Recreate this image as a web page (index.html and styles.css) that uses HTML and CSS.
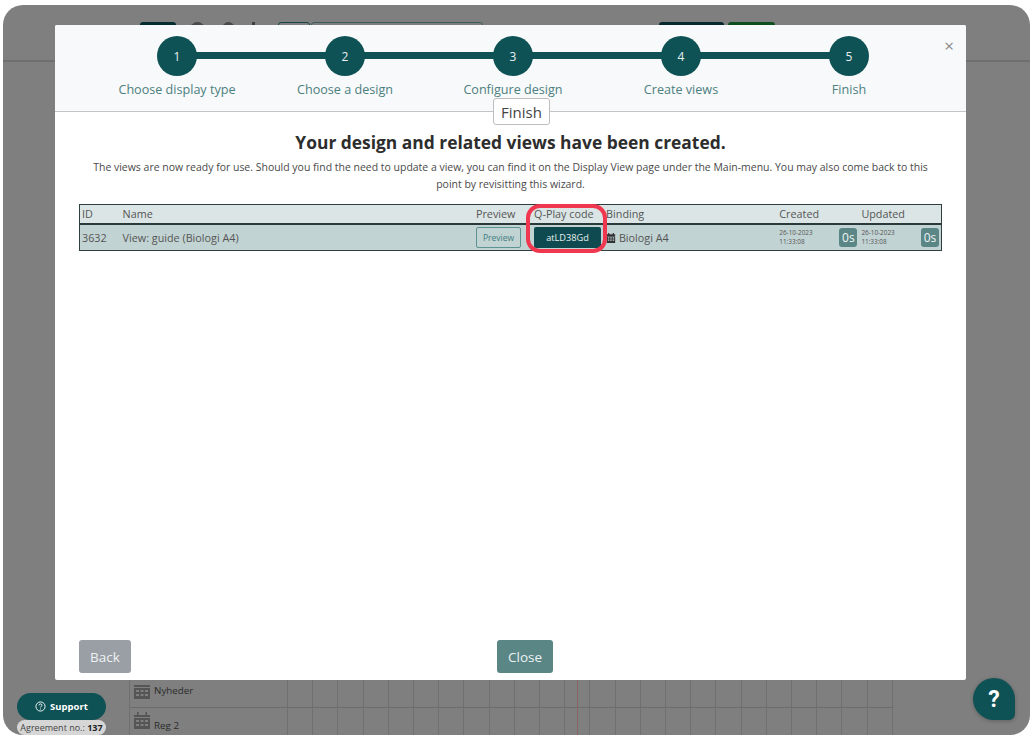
FILE: index.html
```html
<!DOCTYPE html>
<html lang="en">
<head>
<meta charset="utf-8">
<title>Design wizard</title>
<link rel="stylesheet" href="styles.css">
</head>
<body>
<div class="frame">
  <div class="app">
    <header class="topbar">
      <span class="tb-dark"></span>
      <span class="tb-dot"></span>
      <span class="tb-dot tb-dot2"></span>
      <span class="tb-tick"></span>
      <span class="tb-box tb-box1"></span>
      <span class="tb-box tb-box2"></span>
      <span class="tb-btn1"></span>
      <span class="tb-btn2"></span>
    </header>
    <div class="sheet">
      <div class="row row1">
        <div class="row-head">
          <svg class="cal" viewBox="0 0 16 17"><path d="M0 3h16v2H0z"/><path d="M0 6h16v11H0z"/><g class="cal-holes"><path d="M2 8h3v2H2zM6.500 8h3v2h-3zM11 8h3v2h-3zM2 12h3v2H2zM6.500 12h3v2h-3zM11 12h3v2h-3z"/></g></svg>
          <span class="row-name">Nyheder</span>
        </div>
        <div class="cells"></div>
      </div>
      <div class="row row2">
        <div class="row-head">
          <svg class="cal" viewBox="0 0 16 17"><path d="M3 0h1.500v3H3zM11.500 0H13v3h-1.500zM0 3h16v2H0z"/><path d="M0 6h16v11H0z"/><g class="cal-holes"><path d="M2 8h3v2H2zM6.500 8h3v2h-3zM11 8h3v2h-3zM2 12h3v2H2zM6.500 12h3v2h-3zM11 12h3v2h-3z"/></g></svg>
          <span class="row-name">Reg 2</span>
        </div>
        <div class="cells"></div>
      </div>
      <span class="now-line"></span>
    </div>
  </div>

  <div class="support">
    <button class="support-btn">
      <svg class="support-ico" viewBox="0 0 12 12"><circle cx="6" cy="6" r="5" /><path d="M4.400 4.700C4.400 3.700 5.100 3.200 6 3.200c.9 0 1.600.6 1.600 1.400 0 1.200-1.600 1.200-1.600 2.400"/><path d="M6 8.200v1"/></svg>
      Support
    </button>
    <div class="agreement">Agreement no.: <b>137</b></div>
  </div>
  <button class="help">?</button>

  <section class="modal">
    <button class="modal-x">×</button>
    <div class="modal-head">
      <ol class="steps">
        <li class="step"><span class="dot">1</span><span class="step-label">Choose display type</span></li>
        <li class="step"><span class="dot">2</span><span class="step-label">Choose a design</span></li>
        <li class="step"><span class="dot">3</span><span class="step-label">Configure design</span></li>
        <li class="step"><span class="dot">4</span><span class="step-label">Create views</span></li>
        <li class="step"><span class="dot">5</span><span class="step-label">Finish</span></li>
      </ol>
    </div>
    <div class="modal-body">
      <div class="tag">Finish</div>
      <h1 class="title">Your design and related views have been created.</h1>
      <p class="lead">The views are now ready for use. Should you find the need to update a view, you can find it on the Display View page under the Main-menu. You may also come back to this point by revisitting this wizard.</p>
      <div class="table-wrap">
        <table class="views">
          <colgroup>
            <col class="c-id"><col class="c-name"><col class="c-prev"><col class="c-code"><col class="c-bind"><col class="c-date"><col class="c-date">
          </colgroup>
          <thead>
            <tr><th>ID</th><th>Name</th><th>Preview</th><th>Q-Play code</th><th>Binding</th><th>Created</th><th>Updated</th></tr>
          </thead>
          <tbody>
            <tr>
              <td>3632</td>
              <td>View: guide (Biologi A4)</td>
              <td><button class="btn-preview">Preview</button></td>
              <td><button class="btn-code">atLD38Gd</button></td>
              <td><svg class="bind-ico" viewBox="0 0 12 12"><path d="M2.500 0h1.500v2H2.500zM8 0h1.500v2H8zM1 1.500h10v2H1z"/><path fill-rule="evenodd" d="M1 4h10v8H1zM2.200 5.200v1.500h1.800V5.200zM5.100 5.200v1.500h1.800V5.200zM8 5.200v1.500h1.800V5.200zM2.200 7.700v1.500h1.800V7.700zM5.100 7.700v1.500h1.800V7.700zM8 7.700v1.500h1.800V7.700z"/></svg> Biologi A4</td>
              <td><div class="stamp"><span class="date">26-10-2023<br>11:33:08</span><span class="age">0s</span></div></td>
              <td><div class="stamp"><span class="date">26-10-2023<br>11:33:08</span><span class="age">0s</span></div></td>
            </tr>
          </tbody>
        </table>
        <span class="marker"></span>
      </div>
      <footer class="modal-foot">
        <button class="btn btn-back">Back</button>
        <button class="btn btn-close">Close</button>
      </footer>
    </div>
  </section>
</div>
</body>
</html>
```

FILE: styles.css
```css
* { box-sizing: border-box; }
html, body { margin: 0; padding: 0; background: #fff; height: 100%; overflow: hidden; }
body { font-family: "Open Sans", "Noto Sans", sans-serif; color: #333; }
button { font-family: inherit; cursor: pointer; }

.frame {
  position: relative;
  width: 1027px;
  height: 730px;
  margin: 5px 0 0 3px;
  border-radius: 20px;
  background: #7f7f7f;
  overflow: hidden;
}
.app { height: 100%; display: flex; flex-direction: column; }
.topbar {
  height: 57px;
  flex: none;
  border-bottom: 2px solid #6f6f6f;
  display: flex;
  align-items: flex-start;
  padding: 17px 0 0 137px;
}
.tb-dark { width: 36px; height: 14px; background: #052d30; border-radius: 3px; margin-right: 14px; }
.tb-dot { width: 15px; height: 15px; border-radius: 50%; background: #4a4a4a; margin-right: 17px; }
.tb-dot2 { width: 13px; }
.tb-tick { width: 3px; height: 14px; background: #3f3f3f; margin-right: 23px; }
.tb-box { height: 14px; border: 1px solid #3d5a5c; border-radius: 3px 3px 0 0; }
.tb-box1 { width: 32px; margin-right: 1px; border-color: #174548; }
.tb-box2 { width: 172px; margin-right: 176px; }
.tb-btn1 { width: 65px; height: 14px; background: #05292c; border-radius: 3px; margin-right: 4px; }
.tb-btn2 { width: 47px; height: 14px; background: #0f4f1f; border-radius: 3px; }

.sheet {
  position: relative;
  flex: 1;
  display: flex;
  flex-direction: column;
  justify-content: flex-end;
  margin-left: 126px;
  width: 764px;
}
.row {
  display: flex;
  border-left: 1px solid #707070;
  font-size: 10px;
  color: #2b2b2b;
}
.row1 { height: 28px; border-bottom: 1px solid #6c6c6c; }
.row2 { height: 27px; }
.row-head { width: 157px; flex: none; display: flex; gap: 4px; padding-left: 4px; align-items: center; }
.row1 .row-head { padding-bottom: 7px; }
.row2 .row-head { padding-bottom: 3px; }
.row2 .row-name { margin-top: 10px; }
.cells {
  flex: 1;
  background-image: repeating-linear-gradient(to right, #707070 0, #707070 1px, transparent 1px, transparent 25.2px);
}
.row-name { font-weight: 400; font-size: 9.800px; }
.cal { width: 16px; height: 17px; flex: none; fill: #555; }
.cal-holes { fill: #7f7f7f; }
.now-line { position: absolute; left: 448px; bottom: 0; width: 1px; height: 55px; background: #8a6464; }

.support { position: absolute; left: 14px; bottom: 0; width: 89px; }
.support-btn {
  width: 89px; height: 27px;
  display: flex; align-items: center; justify-content: center; gap: 4px;
  background: #0f5256; color: #fff;
  border: 0; border-radius: 14px;
  font-size: 9.500px; font-weight: 700;
}
.support-ico { width: 11px; height: 11px; fill: none; stroke: #fff; stroke-width: 1; }
.agreement {
  height: 15px; line-height: 15px; text-align: center;
  background: #d6d6d6; border-radius: 8px;
  font-size: 9px; color: #444; white-space: nowrap;
}
.agreement b { color: #222; }
.help {
  position: absolute; left: 970px; top: 673px;
  width: 42px; height: 42px; padding: 0;
  background: #0f5256; color: #fff; border: 0;
  border-radius: 50% 50% 6px 50%;
  font-family: "Roboto", sans-serif; font-size: 23px; font-weight: 700;
  box-shadow: 0 1px 4px rgba(0,0,0,.25);
}

.modal {
  position: absolute; left: 52px; top: 20px;
  width: 911px; height: 655px;
  background: #fff; border-radius: 2px;
  display: flex; flex-direction: column;
}
.modal-x {
  position: absolute; right: 12px; top: 11px;
  padding: 0; background: none; border: 0;
  font-size: 17px; line-height: 20px; color: #8a8a8a;
}
.modal-head {
  height: 87px; flex: none;
  background: #f8f9fa;
  border-bottom: 1px solid #c4c4c4;
  border-radius: 2px 2px 0 0;
  padding: 11px 0 0 38px;
}
.steps { list-style: none; margin: 0; padding: 0; display: flex; width: 840px; }
.step { position: relative; width: 168px; display: flex; flex-direction: column; align-items: center; gap: 5px; }
.step:not(:last-child)::after {
  content: ""; position: absolute;
  left: 50%; top: 16px; width: 168px; height: 7px;
  background: #0f5256;
}
.dot {
  position: relative; z-index: 1;
  width: 40px; height: 40px; border-radius: 50%;
  background: #0f5256; color: #e8f0f0;
  display: flex; align-items: center; justify-content: center;
  font-size: 12px;
}
.step-label { font-size: 12.600px; line-height: 18px; color: #4c7f80; white-space: nowrap; }

.modal-body { flex: 1; min-height: 0; display: flex; flex-direction: column; align-items: center; padding: 0 24px 7px; }
.tag {
  margin: -14px 0 0 22px; position: relative;
  width: 57px; height: 27px; line-height: 27px; text-align: center;
  background: #fff; border: 1px solid #bdbdbd; border-radius: 3px;
  font-size: 15px; color: #444;
}
.title { margin: 4px 0 0; font-size: 17.400px; line-height: 26px; font-weight: 700; color: #2d2d2d; }
.lead { margin: 4px 0 0; font-size: 10.470px; line-height: 17px; text-align: center; color: #4a4a4a; width: 850px; }

.table-wrap { position: relative; width: 863px; margin-top: 11px; }
.views { width: 863px; table-layout: fixed; border-collapse: collapse; border: 1px solid #2f3f40; font-size: 10.800px; color: #555; }
.c-id { width: 41px; }
.c-name { width: 353px; }
.c-prev { width: 58px; }
.c-code { width: 72px; }
.c-bind { width: 173px; }
.c-date { width: 82px; }
.views thead tr { background: #dbe5e5; border-bottom: 2px solid #2a3a3b; }
.views th { height: 19px; padding: 0 2px; text-align: left; font-weight: 400; }
.views tbody tr { background: #c2d3d3; }
.views td { height: 27px; padding: 0 2px; white-space: nowrap; }
.btn-preview {
  width: 45px; height: 21px; padding: 0;
  background: transparent; color: #3f8080;
  border: 1px solid #5f9393; border-radius: 2px;
  font-size: 8.500px;
  display: block;
}
.btn-code {
  width: 67px; height: 21px; padding: 0;
  background: #0e4a4f; color: #e8f0f0;
  border: 0; border-radius: 2px;
  font-size: 9.200px;
  display: block;
}
.bind-ico { width: 10px; height: 10px; fill: #333; vertical-align: -1px; }
.stamp { display: flex; align-items: center; justify-content: space-between; }
.date { font-size: 6.400px; line-height: 9px; color: #555; }
.age {
  width: 18px; height: 19px; line-height: 19px; text-align: center;
  background: #5a8686; color: #f0f5f5; border-radius: 3px;
  font-size: 12px;
}
.marker {
  position: absolute; left: 447px; top: 0;
  width: 81px; height: 49px;
  border: 4px solid #f03750; border-radius: 14px;
  pointer-events: none;
}

.modal-foot { margin-top: auto; width: 863px; display: flex; gap: 366px; align-items: flex-end; }
.btn { height: 33px; border: 0; border-radius: 3px; font-size: 13.500px; color: #eef2f2; padding: 0; }
.btn-back { width: 52px; background: #9a9ea5; }
.btn-close { width: 56px; background: #5a8686; }
```
